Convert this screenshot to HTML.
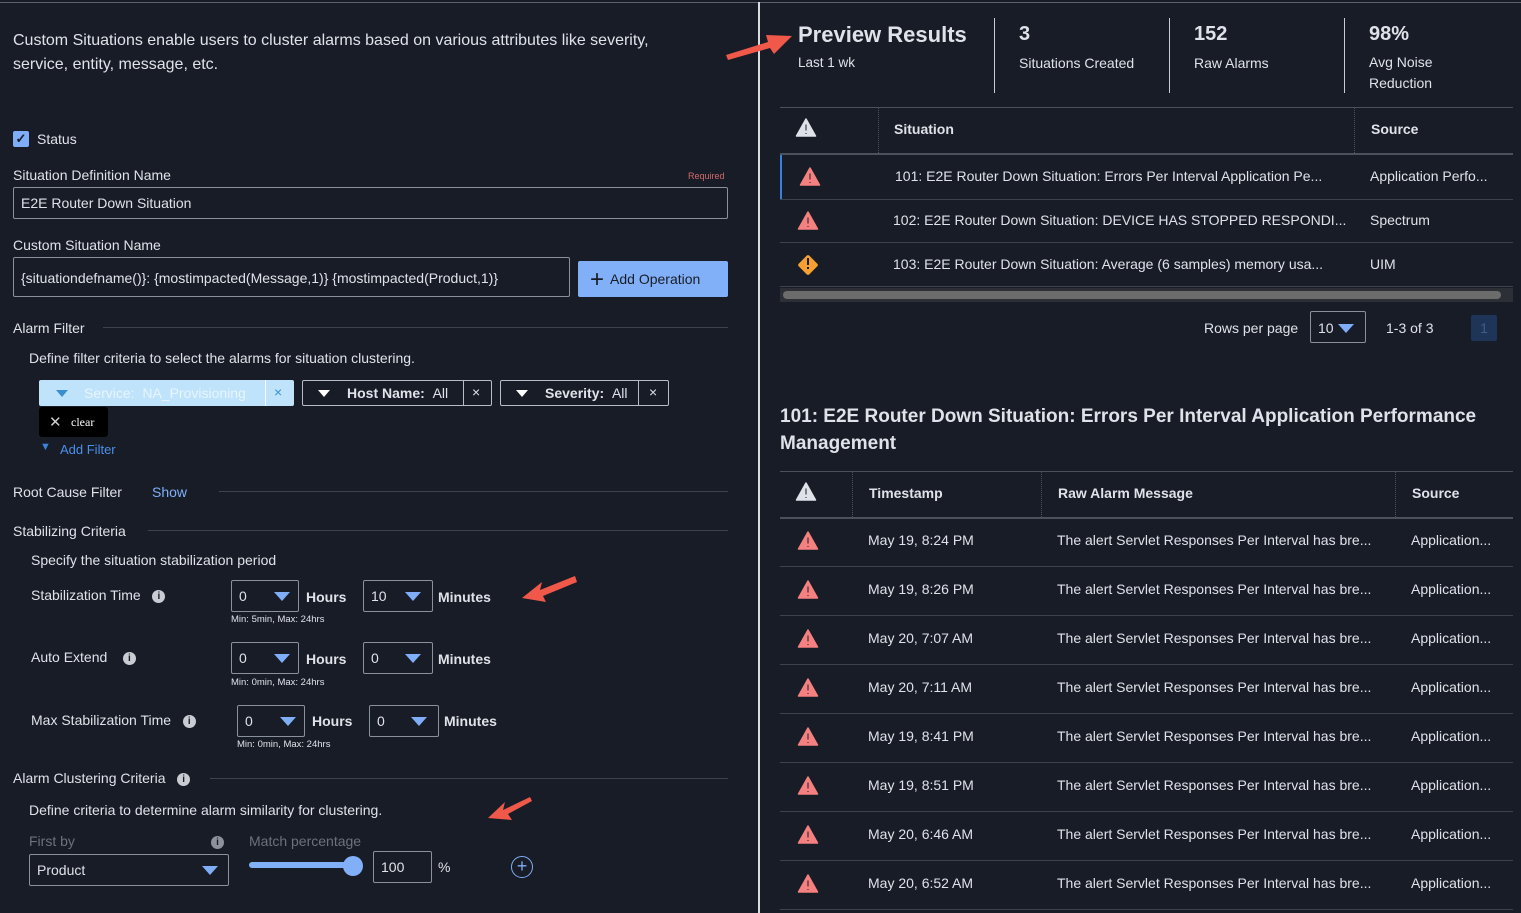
<!DOCTYPE html><html><head><meta charset="utf-8"><style>
*{box-sizing:border-box;margin:0;padding:0}
html{overflow:hidden;width:1521px;height:913px}
body{width:1521px;height:913px;background:#181c26;color:#dfe2e8;font-family:"Liberation Sans",sans-serif;font-size:14px;position:relative;overflow:hidden}
.a{position:absolute;white-space:nowrap}
.in{position:absolute;border:1px solid #8a909c;border-radius:2px}
.hl{position:absolute;height:1px;background:#3c424e}
.b{font-weight:bold}
.tri{position:absolute;width:0;height:0;border-left:8px solid transparent;border-right:8px solid transparent;border-top:9px solid #7fadf7}
.hdr{font-weight:bold;font-size:14px}
.info{display:inline-block;width:13px;height:13px;border-radius:50%;background:#c9ccd3;color:#181c26;font-size:10px;font-weight:bold;text-align:center;line-height:13px;vertical-align:middle}
</style></head><body>
<div class="hl" style="left:0;top:2px;width:1521px;background:#5a606c"></div>
<div class="a" style="left:758px;top:2px;width:2px;height:911px;background:#d8dbe0"></div>

<div class="a" style="left:13px;top:29px;font-size:16px;line-height:24px;white-space:normal;width:680px">Custom Situations enable users to cluster alarms based on various attributes like severity, service, entity, message, etc.</div>
<div class="a" style="left:13px;top:131px;width:16px;height:16px;background:#7fadf7;border-radius:2px;color:#181c26;font-size:13px;text-align:center;line-height:16px;font-weight:bold">✓</div>
<div class="a" style="left:37px;top:131px">Status</div>
<div class="a" style="left:13px;top:167px">Situation Definition Name</div>
<div class="a" style="left:688px;top:171px;font-size:9px;color:#d06a6a">Required</div>
<div class="in" style="left:13px;top:187px;width:715px;height:32px"></div>
<div class="a" style="left:21px;top:195px">E2E Router Down Situation</div>
<div class="a" style="left:13px;top:237px">Custom Situation Name</div>
<div class="in" style="left:13px;top:257px;width:557px;height:40px"></div>
<div class="a" style="left:21px;top:270px;font-size:14px">{situationdefname()}: {mostimpacted(Message,1)} {mostimpacted(Product,1)}</div>
<div class="a" style="left:578px;top:261px;width:150px;height:36px;background:#82b0f8;border-radius:2px;color:#181c26;font-size:14px;line-height:36px;padding-left:12px"><span style="font-size:24px;vertical-align:-3px;margin-right:6px">+</span>Add Operation</div>

<div class="a" style="left:13px;top:320px">Alarm Filter</div><div class="hl" style="left:103px;top:327px;width:625px"></div>
<div class="a" style="left:29px;top:350px">Define filter criteria to select the alarms for situation clustering.</div>
<div class="a" style="left:39px;top:380px;width:255px;height:26px;background:#bfe3fb;border-radius:2px"></div>
<div class="tri" style="left:56px;top:390px;border-width:7px 6px 0 6px;border-top-color:#3a8fd0"></div>
<div class="a" style="left:84px;top:385px;color:#e8f4fe;font-size:14px">Service:&nbsp; NA_Provisioning</div>
<div class="a" style="left:265px;top:380px;width:1px;height:26px;background:#fff"></div>
<div class="a" style="left:274px;top:384px;color:#3a8fd0">×</div>
<div class="in" style="left:302px;top:380px;width:190px;height:26px;border-color:#b8bcc6"></div>
<div class="tri" style="left:318px;top:390px;border-width:7px 6px 0 6px;border-top-color:#fff"></div>
<div class="a b" style="left:347px;top:385px">Host Name:&nbsp; <span style="font-weight:normal">All</span></div>
<div class="a" style="left:463px;top:380px;width:1px;height:26px;background:#b8bcc6"></div>
<div class="a" style="left:472px;top:384px">×</div>
<div class="in" style="left:500px;top:380px;width:169px;height:26px;border-color:#b8bcc6"></div>
<div class="tri" style="left:516px;top:390px;border-width:7px 6px 0 6px;border-top-color:#fff"></div>
<div class="a b" style="left:545px;top:385px">Severity:&nbsp; <span style="font-weight:normal">All</span></div>
<div class="a" style="left:638px;top:380px;width:1px;height:26px;background:#b8bcc6"></div>
<div class="a" style="left:649px;top:384px">×</div>
<div class="a" style="left:39px;top:407px;width:69px;height:30px;background:#000;border-radius:3px"></div>
<div class="a" style="left:49px;top:413px;color:#ccc;font-size:15px">✕</div>
<div class="a" style="left:71px;top:415px;font-family:'Liberation Serif',serif;font-size:12px;color:#fff">clear</div>
<div class="a" style="left:40px;top:441px;color:#3a84e0;font-size:11px">▼</div>
<div class="a" style="left:60px;top:442px;color:#4a90e8;font-size:13px">Add Filter</div>

<div class="a" style="left:13px;top:484px">Root Cause Filter</div>
<div class="a" style="left:152px;top:484px;color:#7fb0f8">Show</div>
<div class="hl" style="left:219px;top:491px;width:509px"></div>
<div class="a" style="left:13px;top:523px">Stabilizing Criteria</div><div class="hl" style="left:148px;top:530px;width:580px"></div>
<div class="a" style="left:31px;top:552px">Specify the situation stabilization period</div>

<div class="a" style="left:31px;top:587px">Stabilization Time&nbsp;&nbsp; <span class="info">i</span></div>
<div class="in" style="left:231px;top:580px;width:68px;height:32px"></div><div class="a" style="left:239px;top:588px">0</div><div class="tri" style="left:274px;top:592px"></div>
<div class="a b" style="left:306px;top:589px">Hours</div>
<div class="in" style="left:363px;top:580px;width:70px;height:32px"></div><div class="a" style="left:371px;top:588px">10</div><div class="tri" style="left:405px;top:592px"></div>
<div class="a b" style="left:438px;top:589px">Minutes</div>
<div class="a" style="left:231px;top:614px;font-size:9.5px">Min: 5min, Max: 24hrs</div>

<div class="a" style="left:31px;top:649px">Auto Extend&nbsp;&nbsp;&nbsp; <span class="info">i</span></div>
<div class="in" style="left:231px;top:642px;width:68px;height:32px"></div><div class="a" style="left:239px;top:650px">0</div><div class="tri" style="left:274px;top:654px"></div>
<div class="a b" style="left:306px;top:651px">Hours</div>
<div class="in" style="left:363px;top:642px;width:70px;height:32px"></div><div class="a" style="left:371px;top:650px">0</div><div class="tri" style="left:405px;top:654px"></div>
<div class="a b" style="left:438px;top:651px">Minutes</div>
<div class="a" style="left:231px;top:677px;font-size:9.5px">Min: 0min, Max: 24hrs</div>

<div class="a" style="left:31px;top:712px">Max Stabilization Time&nbsp;&nbsp; <span class="info">i</span></div>
<div class="in" style="left:237px;top:705px;width:68px;height:32px"></div><div class="a" style="left:245px;top:713px">0</div><div class="tri" style="left:280px;top:717px"></div>
<div class="a b" style="left:312px;top:713px">Hours</div>
<div class="in" style="left:369px;top:705px;width:70px;height:32px"></div><div class="a" style="left:377px;top:713px">0</div><div class="tri" style="left:411px;top:717px"></div>
<div class="a b" style="left:444px;top:713px">Minutes</div>
<div class="a" style="left:237px;top:739px;font-size:9.5px">Min: 0min, Max: 24hrs</div>

<div class="a" style="left:13px;top:770px">Alarm Clustering Criteria&nbsp;&nbsp; <span class="info">i</span></div><div class="hl" style="left:210px;top:778px;width:518px"></div>
<div class="a" style="left:29px;top:802px">Define criteria to determine alarm similarity for clustering.</div>
<div class="a" style="left:29px;top:833px;color:#6b717d">First by</div><div class="a" style="left:211px;top:833px"><span class="info" style="background:#8c919c">i</span></div>
<div class="a" style="left:249px;top:833px;color:#6b717d">Match percentage</div>
<div class="in" style="left:29px;top:854px;width:200px;height:32px"></div>
<div class="a" style="left:37px;top:862px">Product</div><div class="tri" style="left:202px;top:866px"></div>
<div class="a" style="left:249px;top:862px;width:108px;height:6px;background:#82b0f8;border-radius:3px"></div>
<div class="a" style="left:343px;top:856px;width:20px;height:20px;background:#82b0f8;border-radius:50%"></div>
<div class="in" style="left:373px;top:851px;width:59px;height:32px"></div><div class="a" style="left:381px;top:859px">100</div>
<div class="a" style="left:438px;top:859px">%</div>
<div class="a" style="left:511px;top:856px;width:22px;height:22px;border:1px solid #7fadf7;border-radius:50%;color:#7fadf7;text-align:center;line-height:19px;font-size:18px">+</div>

<!-- arrows -->
<svg class="a" style="left:0;top:0" width="1521" height="913"><g fill="#f0584a">
<path d="M726 55 L768 42 L766 35 L792 36 L774 54 L770 48 L728 60Z"/>
<path d="M575 576 L540 590 L542 582 L522 598 L546 602 L543 596 L577 582Z"/>
<path d="M530 797 L503 810 L505 802 L488 818 L512 820 L508 814 L532 801Z"/></g></svg>

<!-- right -->
<div class="a b" style="left:798px;top:22px;font-size:22px">Preview Results</div>
<div class="a" style="left:798px;top:55px;font-size:13.5px">Last 1 wk</div>
<div class="a" style="left:994px;top:18px;width:1px;height:75px;background:#c8ccd3"></div>
<div class="a b" style="left:1019px;top:23px;font-size:20px">3</div>
<div class="a" style="left:1019px;top:55px">Situations Created</div>
<div class="a" style="left:1169px;top:18px;width:1px;height:75px;background:#c8ccd3"></div>
<div class="a b" style="left:1194px;top:23px;font-size:20px">152</div>
<div class="a" style="left:1194px;top:55px">Raw Alarms</div>
<div class="a" style="left:1344px;top:18px;width:1px;height:75px;background:#c8ccd3"></div>
<div class="a b" style="left:1369px;top:23px;font-size:20px">98%</div>
<div class="a" style="left:1369px;top:52px;line-height:21px">Avg Noise<br>Reduction</div>

<div class="hl" style="left:780px;top:107px;width:733px;background:#4a505c"></div>
<div class="a" style="left:878px;top:108px;height:45px;border-left:1px dotted #4a505c"></div>
<div class="a" style="left:1354px;top:108px;height:45px;border-left:1px dotted #4a505c"></div>
<div class="a hdr" style="left:894px;top:121px">Situation</div>
<div class="a hdr" style="left:1371px;top:121px">Source</div>
<div class="hl" style="left:780px;top:153px;width:733px;height:2px;background:#4a505c"></div>
<div class="a" style="left:780px;top:155px;width:2px;height:44px;background:#3a7fe0"></div>
<div class="hl" style="left:780px;top:199px;width:733px"></div>
<div class="hl" style="left:780px;top:242px;width:733px"></div>
<div class="hl" style="left:780px;top:286px;width:733px"></div>
<div class="a" style="left:895px;top:168px">101: E2E Router Down Situation: Errors Per Interval Application Pe...</div>
<div class="a" style="left:1370px;top:168px">Application Perfo...</div>
<div class="a" style="left:893px;top:212px">102: E2E Router Down Situation: DEVICE HAS STOPPED RESPONDI...</div>
<div class="a" style="left:1370px;top:212px">Spectrum</div>
<div class="a" style="left:893px;top:256px">103: E2E Router Down Situation: Average (6 samples) memory usa...</div>
<div class="a" style="left:1370px;top:256px">UIM</div>
<div class="a" style="left:780px;top:288px;width:733px;height:14px;background:#2c2f36"></div>
<div class="a" style="left:783px;top:291px;width:718px;height:8px;background:#6c6c6c;border-radius:4px"></div>

<div class="a" style="left:1204px;top:320px">Rows per page</div>
<div class="in" style="left:1310px;top:311px;width:56px;height:32px"></div>
<div class="a" style="left:1318px;top:320px">10</div><div class="tri" style="left:1338px;top:324px"></div>
<div class="a" style="left:1386px;top:320px">1-3 of 3</div>
<div class="a" style="left:1471px;top:315px;width:26px;height:26px;background:#1f3558;border-radius:2px;color:#3e5c88;text-align:center;line-height:26px">1</div>

<div class="a b" style="left:780px;top:403px;font-size:19px;line-height:27px;white-space:normal;width:720px">101: E2E Router Down Situation: Errors Per Interval Application Performance Management</div>

<div class="hl" style="left:780px;top:471px;width:733px;background:#4a505c"></div>
<div class="a" style="left:852px;top:472px;height:45px;border-left:1px dotted #4a505c"></div>
<div class="a" style="left:1041px;top:472px;height:45px;border-left:1px dotted #4a505c"></div>
<div class="a" style="left:1395px;top:472px;height:45px;border-left:1px dotted #4a505c"></div>
<div class="a hdr" style="left:869px;top:485px">Timestamp</div>
<div class="a hdr" style="left:1058px;top:485px">Raw Alarm Message</div>
<div class="a hdr" style="left:1412px;top:485px">Source</div>
<div class="hl" style="left:780px;top:517px;width:733px;height:2px;background:#4a505c"></div>

<svg class="a" style="left:0;top:0" width="1521" height="913">
<defs><g id="w"><path d="M10 1 L19.5 18 L0.5 18Z" stroke-linejoin="round" stroke-width="1.5"/><rect x="9" y="6" width="2" height="7" fill="#181c26"/><rect x="9" y="14.5" width="2" height="2" fill="#181c26"/></g></defs>
<use href="#w" x="796" y="118" fill="#dfe2e8" stroke="#dfe2e8"/>
<use href="#w" x="796" y="482" fill="#dfe2e8" stroke="#dfe2e8"/>
<use href="#w" x="800" y="167" fill="#f58080" stroke="#f58080"/>
<use href="#w" x="798" y="211" fill="#f58080" stroke="#f58080"/>
<g transform="translate(808,265) rotate(45)"><rect x="-7.5" y="-7.5" width="15" height="15" rx="2" fill="#f5a030"/></g>
<rect x="807" y="258" width="2" height="7" fill="#181c26"/><rect x="807" y="267" width="2" height="2" fill="#181c26"/>
<use href="#w" x="798" y="531" fill="#f58080" stroke="#f58080"/>
<use href="#w" x="798" y="580" fill="#f58080" stroke="#f58080"/>
<use href="#w" x="798" y="629" fill="#f58080" stroke="#f58080"/>
<use href="#w" x="798" y="678" fill="#f58080" stroke="#f58080"/>
<use href="#w" x="798" y="727" fill="#f58080" stroke="#f58080"/>
<use href="#w" x="798" y="776" fill="#f58080" stroke="#f58080"/>
<use href="#w" x="798" y="825" fill="#f58080" stroke="#f58080"/>
<use href="#w" x="798" y="874" fill="#f58080" stroke="#f58080"/>
</svg>

<div class="a" style="left:868px;top:516px;line-height:49px">May 19, 8:24 PM<br>May 19, 8:26 PM<br>May 20, 7:07 AM<br>May 20, 7:11 AM<br>May 19, 8:41 PM<br>May 19, 8:51 PM<br>May 20, 6:46 AM<br>May 20, 6:52 AM</div>
<div class="a" style="left:1057px;top:516px;line-height:49px">The alert Servlet Responses Per Interval has bre...<br>The alert Servlet Responses Per Interval has bre...<br>The alert Servlet Responses Per Interval has bre...<br>The alert Servlet Responses Per Interval has bre...<br>The alert Servlet Responses Per Interval has bre...<br>The alert Servlet Responses Per Interval has bre...<br>The alert Servlet Responses Per Interval has bre...<br>The alert Servlet Responses Per Interval has bre...</div>
<div class="a" style="left:1411px;top:516px;line-height:49px">Application...<br>Application...<br>Application...<br>Application...<br>Application...<br>Application...<br>Application...<br>Application...</div>
<div class="hl" style="left:780px;top:566px;width:733px"></div>
<div class="hl" style="left:780px;top:615px;width:733px"></div>
<div class="hl" style="left:780px;top:664px;width:733px"></div>
<div class="hl" style="left:780px;top:713px;width:733px"></div>
<div class="hl" style="left:780px;top:762px;width:733px"></div>
<div class="hl" style="left:780px;top:811px;width:733px"></div>
<div class="hl" style="left:780px;top:860px;width:733px"></div>
<div class="hl" style="left:780px;top:909px;width:733px"></div>
</body></html>
